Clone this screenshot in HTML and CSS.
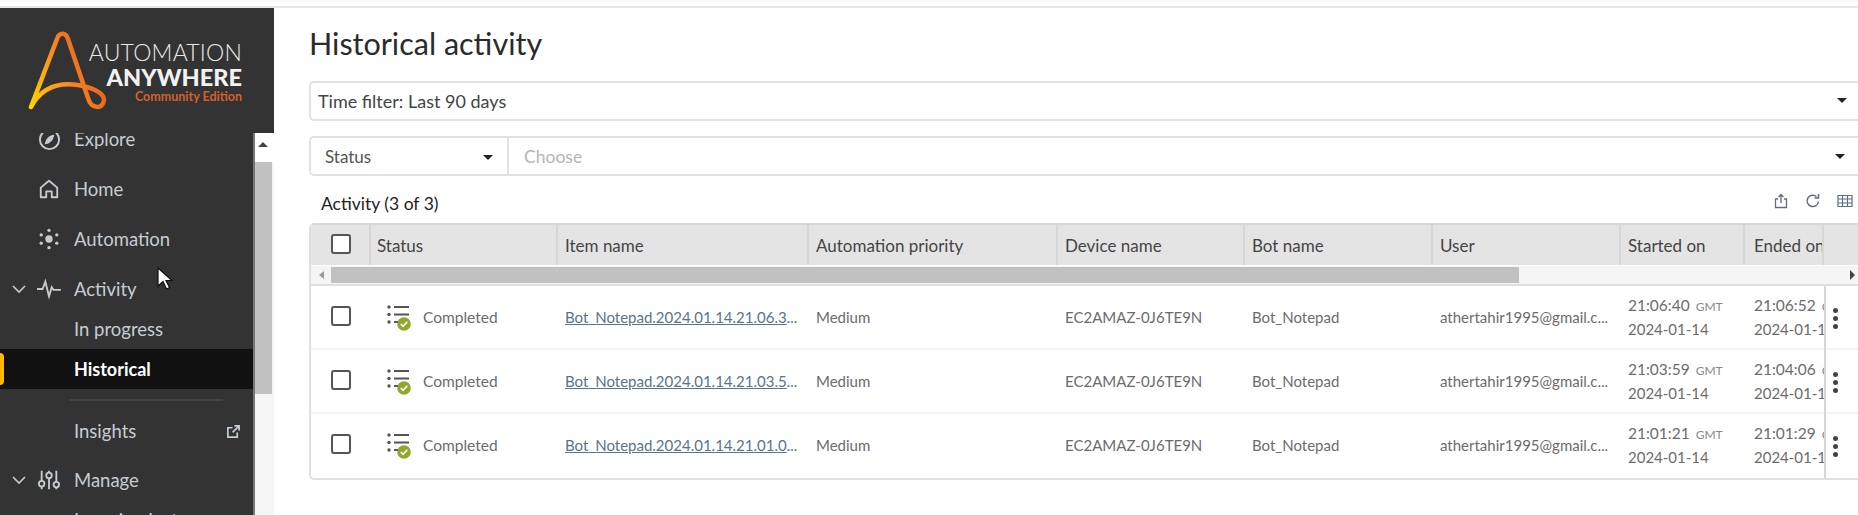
FILE: index.html
```html
<!DOCTYPE html>
<html lang="en">
<head>
<meta charset="utf-8">
<title>Historical activity</title>
<link rel="stylesheet" href="styles.css">
</head>
<body>
<div class="topbar"></div>
<div class="app">
  <aside class="sidebar">
    <div class="brand">
      <svg class="brand-mark" viewBox="0 0 90 90" width="90" height="90">
        <defs>
          <linearGradient id="lg" gradientUnits="userSpaceOnUse" x1="3" y1="77" x2="76" y2="45">
            <stop offset="0" stop-color="#ffd400"/>
            <stop offset="0.45" stop-color="#f9961c"/>
            <stop offset="1" stop-color="#e8591f"/>
          </linearGradient>
        </defs>
        <path fill="none" stroke="url(#lg)" stroke-width="4.500" stroke-linecap="round" d="M3 77 L29 9 C31 2 38 2 40 9 L60 68 C63 79 75 80 76 70 C76 62 62 57 50 55 C28 52 12 60 3 77"/>
      </svg>
      <div class="brand-text">
        <div class="brand-one">AUTOMATION</div>
        <div class="brand-two">ANYWHERE</div>
        <div class="brand-three">Community Edition</div>
      </div>
    </div>
    <div class="nav-wrap">
      <nav class="nav">
        <div class="nav-item">
          <svg class="icon icon-explore" viewBox="0 0 24 24"><circle cx="12" cy="12" r="10" fill="none" stroke="currentColor" stroke-width="2"/><path d="M17 7c-5 .5-8.500 3-10 10 5.500-.5 9-4 10-10z" fill="currentColor"/></svg>
          <span>Explore</span>
        </div>
        <div class="nav-item">
          <svg class="icon" viewBox="0 0 24 24"><path d="M3 21V10.500L12 3l9 7.500V21h-6v-6.500H9V21z" fill="none" stroke="currentColor" stroke-width="2" stroke-linejoin="round"/></svg>
          <span>Home</span>
        </div>
        <div class="nav-item">
          <svg class="icon" viewBox="0 0 24 24" fill="currentColor"><circle cx="12" cy="12" r="4"/><circle cx="12" cy="2.500" r="1.800"/><circle cx="12" cy="21.500" r="1.800"/><circle cx="3.500" cy="7.500" r="1.800"/><circle cx="20.500" cy="7.500" r="1.800"/><circle cx="3.500" cy="16.500" r="1.800"/><circle cx="20.500" cy="16.500" r="1.800"/></svg>
          <span>Automation</span>
        </div>
        <div class="nav-item nav-short">
          <svg class="chev" viewBox="0 0 14 9"><path d="M1 1l6 6 6-6" fill="none" stroke="currentColor" stroke-width="1.600"/></svg>
          <svg class="icon" viewBox="0 0 26 24"><path d="M0 12h6l3-8 4 16 3-10 2 3h8" fill="none" stroke="currentColor" stroke-width="2"/></svg>
          <span>Activity</span>
        </div>
        <div class="nav-sub">In progress</div>
        <div class="nav-sub is-active">Historical</div>
        <div class="nav-divider"></div>
        <div class="nav-sub nav-insights">
          <span>Insights</span>
          <svg class="ext" viewBox="0 0 16 16"><path d="M12 9v5H2V4h5M9 2h5v5M14 2L7 9" fill="none" stroke="currentColor" stroke-width="1.800"/></svg>
        </div>
        <div class="nav-item">
          <svg class="chev" viewBox="0 0 14 9"><path d="M1 1l6 6 6-6" fill="none" stroke="currentColor" stroke-width="1.600"/></svg>
          <svg class="icon" viewBox="0 0 24 24"><path d="M4 2v20M12 2v20M20 2v20" stroke="currentColor" stroke-width="2"/><circle cx="4" cy="16" r="3" fill="#333" stroke="currentColor" stroke-width="2"/><circle cx="12" cy="7" r="3" fill="#333" stroke="currentColor" stroke-width="2"/><circle cx="20" cy="17" r="3" fill="#333" stroke="currentColor" stroke-width="2"/></svg>
          <span>Manage</span>
        </div>
        <div class="nav-sub nav-last">Learning Instances</div>
      </nav>
      <div class="vscroll">
        <div class="vscroll-up"></div>
        <div class="vscroll-thumb"></div>
      </div>
    </div>
    <svg class="cursor" viewBox="0 0 16 24" width="16" height="24"><path d="M1 1v18l5-4.500 3.500 7.500 3-1.500-3.500-7H15z" fill="#fff" stroke="#111" stroke-width="1.200"/></svg>
  </aside>
  <main class="main">
    <h1 class="title">Historical activity</h1>
    <div class="field field-time">
      <span class="field-label">Time filter: Last 90 days</span>
      <i class="caret"></i>
    </div>
    <div class="field field-status">
      <div class="status-select"><span>Status</span><i class="caret"></i></div>
      <div class="status-choose"><span>Choose</span><i class="caret"></i></div>
    </div>
    <div class="toolbar">
      <span class="count">Activity (3 of 3)</span>
      <div class="tools">
        <svg class="tool" viewBox="0 0 16 16"><path d="M5 6H2.500v8.500h11V6H11M8 10V1.500M5.500 4L8 1.500 10.500 4" fill="none" stroke="currentColor" stroke-width="1.300"/></svg>
        <svg class="tool" viewBox="0 0 16 16"><path d="M13.500 8.500A5.700 5.700 0 1 1 11.500 3.500M13.500 1v4h-4" fill="none" stroke="currentColor" stroke-width="1.500"/></svg>
        <svg class="tool" viewBox="0 0 16 16"><path d="M1 2.500h14v11H1zM1 6h14M1 10h14M5.500 2.500v11M10.500 2.500v11" fill="none" stroke="currentColor" stroke-width="1.200"/></svg>
      </div>
    </div>
    <section class="table">
      <div class="thead row-grid">
        <div class="th th-check"><i class="check"></i></div>
        <div class="th th-status">Status</div>
        <div class="th">Item name</div>
        <div class="th">Automation priority</div>
        <div class="th">Device name</div>
        <div class="th">Bot name</div>
        <div class="th">User</div>
        <div class="th">Started on</div>
        <div class="th">Ended on</div>
        <div class="th"></div>
      </div>
      <div class="hscroll">
        <i class="arrow-left"></i>
        <div class="hscroll-thumb"></div>
        <i class="arrow-right"></i>
      </div>
      <div class="tr row-grid">
        <div class="td td-check"><i class="check"></i></div>
        <div class="td td-status">
          <svg class="status-icon" viewBox="0 0 24 28"><path d="M7 4h15M7 11.500h15M7 19h7" stroke="#555" stroke-width="2"/><circle cx="2" cy="4" r="1.700" fill="#555"/><circle cx="2" cy="11.500" r="1.700" fill="#555"/><circle cx="2" cy="19" r="1.700" fill="#555"/><circle cx="17" cy="21" r="6.800" fill="#8fa92e"/><path d="M13.700 21l2.400 2.400 4.200-4.600" fill="none" stroke="#fff" stroke-width="1.600"/></svg>
          <span>Completed</span>
        </div>
        <div class="td"><a class="link">Bot_Notepad.2024.01.14.21.06.3</a><span class="dots">...</span></div>
        <div class="td">Medium</div>
        <div class="td">EC2AMAZ-0J6TE9N</div>
        <div class="td">Bot_Notepad</div>
        <div class="td">athertahir1995@gmail.c...</div>
        <div class="td td-date"><div class="time">21:06:40 <small>GMT</small></div><div>2024-01-14</div></div>
        <div class="td td-date"><div class="time">21:06:52 <small>GMT</small></div><div>2024-01-14</div></div>
        <div class="td td-more"><i class="kebab"></i></div>
      </div>
      <div class="tr row-grid">
        <div class="td td-check"><i class="check"></i></div>
        <div class="td td-status">
          <svg class="status-icon" viewBox="0 0 24 28"><path d="M7 4h15M7 11.500h15M7 19h7" stroke="#555" stroke-width="2"/><circle cx="2" cy="4" r="1.700" fill="#555"/><circle cx="2" cy="11.500" r="1.700" fill="#555"/><circle cx="2" cy="19" r="1.700" fill="#555"/><circle cx="17" cy="21" r="6.800" fill="#8fa92e"/><path d="M13.700 21l2.400 2.400 4.200-4.600" fill="none" stroke="#fff" stroke-width="1.600"/></svg>
          <span>Completed</span>
        </div>
        <div class="td"><a class="link">Bot_Notepad.2024.01.14.21.03.5</a><span class="dots">...</span></div>
        <div class="td">Medium</div>
        <div class="td">EC2AMAZ-0J6TE9N</div>
        <div class="td">Bot_Notepad</div>
        <div class="td">athertahir1995@gmail.c...</div>
        <div class="td td-date"><div class="time">21:03:59 <small>GMT</small></div><div>2024-01-14</div></div>
        <div class="td td-date"><div class="time">21:04:06 <small>GMT</small></div><div>2024-01-14</div></div>
        <div class="td td-more"><i class="kebab"></i></div>
      </div>
      <div class="tr row-grid">
        <div class="td td-check"><i class="check"></i></div>
        <div class="td td-status">
          <svg class="status-icon" viewBox="0 0 24 28"><path d="M7 4h15M7 11.500h15M7 19h7" stroke="#555" stroke-width="2"/><circle cx="2" cy="4" r="1.700" fill="#555"/><circle cx="2" cy="11.500" r="1.700" fill="#555"/><circle cx="2" cy="19" r="1.700" fill="#555"/><circle cx="17" cy="21" r="6.800" fill="#8fa92e"/><path d="M13.700 21l2.400 2.400 4.200-4.600" fill="none" stroke="#fff" stroke-width="1.600"/></svg>
          <span>Completed</span>
        </div>
        <div class="td"><a class="link">Bot_Notepad.2024.01.14.21.01.0</a><span class="dots">...</span></div>
        <div class="td">Medium</div>
        <div class="td">EC2AMAZ-0J6TE9N</div>
        <div class="td">Bot_Notepad</div>
        <div class="td">athertahir1995@gmail.c...</div>
        <div class="td td-date"><div class="time">21:01:21 <small>GMT</small></div><div>2024-01-14</div></div>
        <div class="td td-date"><div class="time">21:01:29 <small>GMT</small></div><div>2024-01-14</div></div>
        <div class="td td-more"><i class="kebab"></i></div>
      </div>
    </section>
  </main>
</div>
</body>
</html>
```
FILE: styles.css
```css
* { box-sizing: border-box; }
html, body { margin: 0; height: 515px; overflow: hidden; background: #fff; }
body { font-family: "Lato", "Open Sans", sans-serif; color: #333; }
.topbar { height: 8px; border-top: 2px solid #f8f8f8; border-bottom: 2px solid #e6e6e6; }
.app { display: flex; height: 507px; width: 1960px; }

.sidebar { position: relative; width: 274px; flex: none; background: #333; display: flex; flex-direction: column; overflow: hidden; }
.brand { height: 125px; flex: none; display: flex; padding: 22px 0 0 28px; }
.brand-mark { flex: none; }
.brand-text { width: 164px; margin-left: -40px; padding-top: 10px; text-align: right; white-space: nowrap; }
.brand-one { font-size: 23px; font-weight: 300; color: #e8e8e8; line-height: 24px; letter-spacing: 0.2px; }
.brand-two { font-size: 23.5px; font-weight: 900; color: #f2f2f2; line-height: 26px; }
.brand-three { font-size: 12.5px; font-weight: 700; color: #d4602a; line-height: 14px; }

.nav-wrap { flex: 1; min-height: 0; display: flex; overflow: hidden; }
.nav { flex: 1; min-width: 0; margin-top: -19px; color: #c5cdd2; font-size: 18.5px; }
.nav-item { height: 50px; display: flex; align-items: center; padding-left: 38px; position: relative; }
.nav-short { height: 45px; padding-top: 5px; }
.nav-item span { margin-left: 14px; }
.icon { width: 22px; height: 22px; flex: none; }
.icon-explore { width: 23px; height: 23px; margin-right: -1px; }
.chev { position: absolute; left: 12px; width: 14px; height: 9px; }
.nav-short .icon { width: 26px; margin: 0 -2px 0 -2px; }
.nav-sub { height: 40px; display: flex; align-items: center; padding-left: 74px; white-space: nowrap; }
.nav-sub.is-active { background: #111; color: #fff; font-weight: 700; font-size: 18px; position: relative; }
.nav-sub.is-active::before { content: ""; position: absolute; left: 0; top: 4px; width: 4px; height: 32px; background: #ffba00; border-radius: 0 4px 4px 0; }
.nav-divider { height: 2px; margin: 10px 30px 0 69px; background: #444; }
.nav-insights { justify-content: space-between; padding-right: 12px; margin: 10px 0 4px; }
.nav-last { margin-top: -5px; }
.ext { width: 15px; height: 15px; }

.vscroll { width: 21px; flex: none; background: #f6f6f6; border-left: 2px solid #777; display: flex; flex-direction: column; }
.vscroll-up { height: 29px; background: #fff; position: relative; }
.vscroll-up::after { content: ""; position: absolute; left: 3px; top: 9px; border: 5px solid transparent; border-top: 0; border-bottom: 5px solid #444; }
.vscroll-thumb { height: 232px; background: #c1c1c1; margin-right: 2px; }
.cursor { position: absolute; left: 157px; top: 259px; }

.main { width: 1620px; flex: none; padding: 0 0 0 35px; }
.title { margin: 17px 0 0; font-size: 30.5px; line-height: 36px; font-weight: 400; color: #2b2b2b; }
.field { height: 40px; border: 2px solid #e2e2e2; border-radius: 5px; display: flex; align-items: center; font-size: 18px; }
.field-time { margin-top: 20px; padding-left: 7px; color: #444; width: 1600px; position: relative; }
.field-status { margin-top: 15px; width: 1600px; font-size: 17px; }
.caret { display: inline-block; border: 5px solid transparent; border-top: 5px solid #222; border-bottom: 0; flex: none; }
.field-time .caret { position: absolute; left: 1526px; top: 15px; }
.status-select { width: 198px; height: 100%; display: flex; align-items: center; justify-content: space-between; padding: 0 14px 0 14px; border-right: 2px solid #e2e2e2; color: #555; }
.status-select .caret { margin-top: 3px; }
.status-choose { flex: 1; height: 100%; display: flex; align-items: center; padding-left: 15px; color: #b5b5b5; font-size: 17.500px; position: relative; }
.status-choose .caret { position: absolute; left: 1326px; top: 16px; }
.toolbar { height: 47px; display: flex; align-items: center; justify-content: space-between; padding-top: 8px; padding-left: 12px; width: 1600px; }
.count { font-size: 17.500px; color: #222; }
.tools { display: flex; gap: 16px; position: absolute; left: 1773px; }
.tool { width: 16px; height: 16px; color: #5c6f80; margin-top: -5px; }

.table { width: 1600px; border: 2px solid #e0e0e0; border-top: 0; border-radius: 5px; overflow: hidden; font-size: 15px; }
.row-grid { display: grid; grid-template-columns: 60px 187px 251px 249px 187px 188px 188px 124px 79px 85px; }
.thead { height: 42px; background: #e4e4e4; border-top: 2px solid #d8d8d8; color: #444; }
.th { display: flex; align-items: center; padding-left: 7px; border-right: 2px solid #d6d6d6; white-space: nowrap; overflow: hidden; font-size: 17px; }
.th.th-status { padding-left: 6px; }
.th.th-check, .td.td-check { padding-left: 20px; }
.check { display: block; width: 20px; height: 20px; margin-top: -2px; border: 2px solid #555; border-radius: 3px; background: #fff; }
.hscroll { height: 21px; background: #f5f5f5; border-top: 1px solid #fff; border-bottom: 2px solid #e0e0e0; display: flex; align-items: center; position: relative; }
.arrow-left { margin-left: 8px; border: 4px solid transparent; border-right: 5px solid #999; border-left: 0; }
.arrow-right { position: absolute; left: 1539px; border: 5px solid transparent; border-left: 5px solid #444; border-right: 0; }
.hscroll-thumb { width: 1188px; height: 16px; margin-left: 7px; background: #c1c1c1; }
.tr { height: 64px; border-bottom: 2px solid #f4f4f4; color: #6c6c6c; }
.tr:last-child { border-bottom-color: transparent; }
.td { display: flex; align-items: center; padding-left: 7px; white-space: nowrap; overflow: hidden; }
.td.td-status { padding-left: 16px; font-size: 15.500px; }
.row-grid > :nth-child(9) { padding-left: 9px; }
.status-icon { width: 24px; height: 28px; flex: none; margin-right: 12px; }
.link { color: #5a7390; text-decoration: underline; }
.dots { color: #6c6c6c; }
.td-date { flex-direction: column; align-items: flex-start; justify-content: center; line-height: 22px; }
.time { font-size: 15.500px; }
.td-date small { font-size: 12px; color: #888; margin-left: 2px; }
.row-grid > .td-more { border-left: 2px solid #d6d6d6; padding-left: 7px; margin-bottom: -2px; }
.kebab { width: 5px; height: 5px; border-radius: 50%; background: #444; box-shadow: 0 -8px 0 #444, 0 8px 0 #444; }
```
